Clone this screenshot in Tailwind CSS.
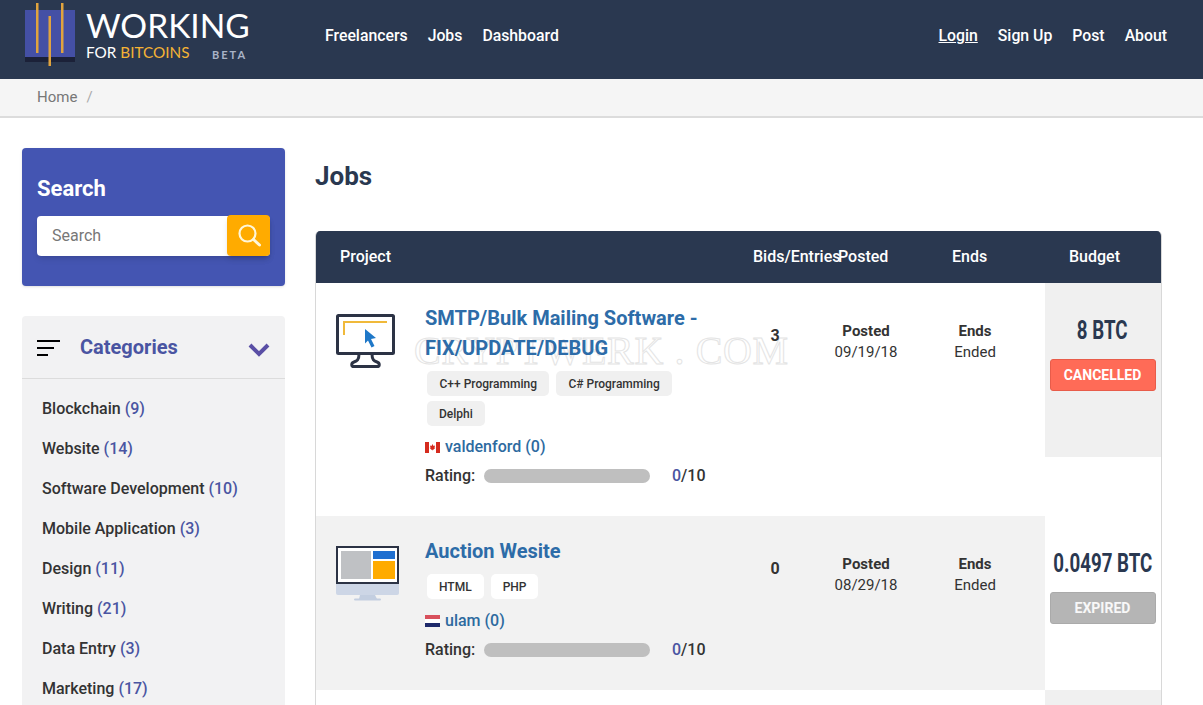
<!DOCTYPE html>
<html lang="en">
<head>
    <meta charset="UTF-8" />
    <meta name="viewport" content="width=device-width, initial-scale=1" />
    <title>Jobs - Working For Bitcoins</title>
    <script src="https://cdn.jsdelivr.net/npm/@tailwindcss/browser@4"></script>
</head>
<body class="bg-white font-['Roboto',sans-serif] text-[#333]">
<div class="relative h-[705px] overflow-hidden">
    <!-- top nav -->
    <header class="flex h-[79px] items-center bg-[#2a3850] pb-[8px] text-white">
        <a href="#" class="relative ml-[25px] block h-[70px] w-[223px] shrink-0 self-start">
            <svg class="absolute left-0 top-0" width="50" height="70" viewBox="0 0 50 70">
                <rect x="0" y="10" width="50" height="50" fill="#4450a5" />
                <rect x="0" y="57" width="50" height="5" fill="#1b2138" />
                <rect x="11" y="3" width="2.500" height="50" fill="#e0a33e" />
                <rect x="36" y="3" width="2.500" height="50" fill="#e0a33e" />
                <rect x="23.500" y="16" width="2.500" height="50" fill="#e0a33e" />
            </svg>
            <span class="absolute left-[61px] top-[10px] whitespace-nowrap font-['Lato',sans-serif] text-[33.500px] font-normal leading-[30px]">WORKING</span>
            <span class="absolute left-[61px] top-[42px] whitespace-nowrap font-['Lato',sans-serif] text-[15.300px] font-normal leading-[20px]">FOR <span class="text-[#f5b335]">BITCOINS</span></span>
            <span class="absolute left-[187px] top-[48px] font-['Lato',sans-serif] text-[11px] font-bold leading-[14px] tracking-[2px] text-[#a9b3c6]">BETA</span>
        </a>
        <nav class="ml-[77px] flex gap-5 text-[15.800px] font-medium">
            <a href="#">Freelancers</a>
            <a href="#">Jobs</a>
            <a href="#">Dashboard</a>
        </nav>
        <nav class="ml-auto mr-[36px] flex gap-5 text-[15.800px] font-medium">
            <a href="#" class="underline">Login</a>
            <a href="#">Sign Up</a>
            <a href="#">Post</a>
            <a href="#">About</a>
        </nav>
    </header>

    <!-- breadcrumb -->
    <div class="flex h-[39px] items-center gap-[9px] border-b-2 border-[#dcdcdc] bg-[#f5f5f5] pl-[37px] text-[15px] text-[#777]">
        <a href="#">Home</a>
        <span class="text-[#aaa]">/</span>
    </div>

    <div class="flex pl-[22px]">
        <!-- sidebar -->
        <aside class="w-[263px] shrink-0 pt-[30px]">
            <div class="h-[138px] rounded-[4px] bg-[#4455b2] px-[15px] pt-[27px] shadow-sm">
                <h3 class="text-[22px] font-bold leading-[28px] text-white">Search</h3>
                <div class="mt-[13px] flex h-[40px] w-[233px] items-center rounded-[4px] bg-white shadow-md">
                    <input type="text" placeholder="Search" class="w-[190px] pl-[15px] text-[16px] outline-none placeholder:text-[#777]" />
                    <button class="ml-auto flex h-[41px] w-[43px] -translate-y-px items-center justify-center rounded-[4px] bg-[#ffab00] shadow-md">
                        <svg width="24" height="24" viewBox="0 0 24 24" fill="none" stroke="#fff6d8" stroke-width="2.200" stroke-linecap="round">
                            <circle cx="10.500" cy="10.500" r="8" />
                            <path d="M16.500 16.500l6 5.500" stroke-width="3" />
                        </svg>
                    </button>
                </div>
            </div>

            <div class="mt-[30px] rounded-[4px] bg-[#f2f2f3]">
                <div class="flex h-[63px] items-center border-b border-[#dcdcdc] pl-[15px] pr-[15px]">
                    <svg width="23" height="16" viewBox="0 0 23 16" class="mt-[2px]" stroke="#000" stroke-width="2">
                        <path d="M0 1h23M0 8h17M0 15h11" />
                    </svg>
                    <h3 class="ml-[20px] text-[20px] font-bold text-[#4a55a2]">Categories</h3>
                    <svg width="22" height="14" viewBox="0 0 22 14" class="ml-auto mt-[6px]" fill="none" stroke="#5a4fa5" stroke-width="4">
                        <path d="M2 2l9 9 9-9" />
                    </svg>
                </div>
                <ul class="pl-[20px] pt-[10px] text-[16px] font-medium leading-[40px]">
                    <li>Blockchain <span class="text-[#4a55a2]">(9)</span></li>
                    <li>Website <span class="text-[#4a55a2]">(14)</span></li>
                    <li>Software Development <span class="text-[#4a55a2]">(10)</span></li>
                    <li>Mobile Application <span class="text-[#4a55a2]">(3)</span></li>
                    <li>Design <span class="text-[#4a55a2]">(11)</span></li>
                    <li>Writing <span class="text-[#4a55a2]">(21)</span></li>
                    <li>Data Entry <span class="text-[#4a55a2]">(3)</span></li>
                    <li>Marketing <span class="text-[#4a55a2]">(17)</span></li>
                </ul>
            </div>
        </aside>

        <!-- jobs table -->
        <main class="ml-[30px] w-[847px]">
            <h1 class="mt-[40px] text-[26px] font-bold leading-[36px] text-[#2a3850]">Jobs</h1>
            <div class="mt-[37px] overflow-hidden rounded-t-[5px] border-x border-[#d8d8d8]">
                <div class="-mx-px flex h-[52px] items-center whitespace-nowrap bg-[#2a3850] text-[16px] font-medium text-white">
                    <div class="w-[438px] pl-[25px]">Project</div>
                    <div class="w-[85px]">Bids/Entries</div>
                    <div class="w-[114px]">Posted</div>
                    <div class="w-[117px]">Ends</div>
                    <div>Budget</div>
                </div>

                <!-- row 1 -->
                <div class="flex h-[233px] bg-white">
                    <div class="w-[109px] shrink-0 pl-[20px] pt-[31px]">
                        <svg width="59" height="54" viewBox="0 0 59 54" fill="none">
                            <rect x="1.500" y="1.500" width="56" height="38" rx="1" stroke="#2c3345" stroke-width="3" />
                            <path d="M8 21V8h43" stroke="#f0b93a" stroke-width="2" />
                            <path d="M29 15l11 9-5 1 3.500 7-3 1.500-3.500-7-3 3z" fill="#1f78c8" />
                            <path d="M23 40c0 6-2 7-5 8-3 1-3 4.500 0 4.500h23c3 0 3-3.500 0-4.500-3-1-5-2-5-8" stroke="#2c3345" stroke-width="3" />
                        </svg>
                    </div>
                    <div class="w-[320px] shrink-0 pt-[20px]">
                        <a href="#" class="relative z-10 block text-[20px] font-bold leading-[30px] text-[#2d6ca8]">SMTP/Bulk Mailing Software - FIX/UPDATE/DEBUG</a>
                        <div class="ml-[2px] mt-[8px] flex w-[270px] flex-wrap gap-x-[7px] gap-y-[5px] text-[12px] font-medium">
                            <span class="flex h-[25px] items-center rounded-[5px] bg-[#f0f0f0] px-[12.500px]">C++ Programming</span>
                            <span class="flex h-[25px] items-center rounded-[5px] bg-[#f0f0f0] px-[12px]">C# Programming</span>
                            <span class="flex h-[25px] items-center rounded-[5px] bg-[#f0f0f0] px-[12px]">Delphi</span>
                        </div>
                        <div class="mt-[9px] flex h-[24px] items-center gap-[5px] text-[16px] font-medium text-[#2d6a9f]">
                            <svg width="15" height="11" viewBox="0 0 15 11">
                                <rect width="15" height="11" fill="#fff" />
                                <rect width="4" height="11" fill="#d52b1e" />
                                <rect x="11" width="4" height="11" fill="#d52b1e" />
                                <path d="M7.500 2l1 2 1.500-.5-.5 2.500 1-.2-2.500 2.200-.5-.2v1.200h-.2V7.800l-.5.2L4.500 5.800l1 .2-.5-2.500 1.500.5z" fill="#d52b1e" />
                            </svg>
                            <a href="#">valdenford (0)</a>
                        </div>
                        <div class="mt-[5px] flex h-[24px] items-center text-[16px] font-medium">
                            <span class="w-[59px]">Rating:</span>
                            <span class="h-[14px] w-[166px] rounded-full bg-[#bfbfbf]"></span>
                            <span class="ml-[22px] whitespace-nowrap"><span class="text-[#4a55a2]">0</span>/10</span>
                        </div>
                    </div>
                    <div class="relative z-10 w-[60px] shrink-0 pt-[43px] text-center text-[16px] font-bold leading-[20px]">3</div>
                    <div class="w-[122px] shrink-0 pt-[38px] text-center text-[15px] leading-[21px]"><b class="font-bold">Posted</b><br />09/19/18</div>
                    <div class="w-[96px] shrink-0 pt-[38px] text-center text-[15px] leading-[21px]"><b class="font-bold">Ends</b><br />Ended</div>
                    <div class="ml-[22px] flex h-[174px] w-[116px] shrink-0 flex-col items-center bg-[#f0f0f0] pr-[1px] pt-[32px]">
                        <div class="scale-x-[0.72] whitespace-nowrap text-[26px] font-bold leading-[30px] text-[#2a3850]">8 BTC</div>
                        <button class="mt-[14px] h-[32px] w-[106px] rounded-[3px] border border-[#e85c4a] bg-[#ff6b57] text-[14px] font-bold text-white">CANCELLED</button>
                    </div>
                </div>

                <!-- row 2 -->
                <div class="flex h-[174px] bg-[#f2f2f2]">
                    <div class="w-[109px] shrink-0 pl-[20px] pt-[30px]">
                        <svg width="63" height="55" viewBox="0 0 63 55">
                            <path d="M0 38h63v9a2 2 0 0 1-2 2H2a2 2 0 0 1-2-2z" fill="#cdd6e6" />
                            <path d="M24 49h15l2 4H23z" fill="#c3cee0" />
                            <rect x="18" y="52.500" width="27" height="2" rx="1" fill="#c3cee0" />
                            <rect x="0" y="0" width="63" height="38" fill="#2c3345" />
                            <rect x="2" y="2" width="59" height="34" fill="#fff" />
                            <rect x="5" y="5" width="30" height="28" fill="#bfc1c4" />
                            <rect x="37" y="5" width="22" height="8" fill="#1f6fd0" />
                            <rect x="37" y="15" width="22" height="18" fill="#ffab00" />
                        </svg>
                    </div>
                    <div class="w-[320px] shrink-0 pt-[20px]">
                        <a href="#" class="block text-[20px] font-bold leading-[30px] text-[#2d6ca8]">Auction Wesite</a>
                        <div class="ml-[2px] mt-[8px] flex gap-x-[7px] text-[12px] font-medium">
                            <span class="flex h-[25px] items-center rounded-[5px] bg-white px-[12px]">HTML</span>
                            <span class="flex h-[25px] items-center rounded-[5px] bg-white px-[12px]">PHP</span>
                        </div>
                        <div class="mt-[10px] flex h-[24px] items-center gap-[5px] text-[16px] font-medium text-[#2d6a9f]">
                            <svg width="15" height="12" viewBox="0 0 15 12">
                                <rect width="15" height="4" fill="#d8505c" />
                                <rect y="4" width="15" height="4" fill="#fff" />
                                <rect y="8" width="15" height="4" fill="#1f2a6b" />
                            </svg>
                            <a href="#">ulam (0)</a>
                        </div>
                        <div class="mt-[5px] flex h-[24px] items-center text-[16px] font-medium">
                            <span class="w-[59px]">Rating:</span>
                            <span class="h-[14px] w-[166px] rounded-full bg-[#bfbfbf]"></span>
                            <span class="ml-[22px] whitespace-nowrap"><span class="text-[#4a55a2]">0</span>/10</span>
                        </div>
                    </div>
                    <div class="w-[60px] shrink-0 pt-[43px] text-center text-[16px] font-bold leading-[20px]">0</div>
                    <div class="w-[122px] shrink-0 pt-[38px] text-center text-[15px] leading-[21px]"><b class="font-bold">Posted</b><br />08/29/18</div>
                    <div class="w-[96px] shrink-0 pt-[38px] text-center text-[15px] leading-[21px]"><b class="font-bold">Ends</b><br />Ended</div>
                    <div class="ml-[22px] flex h-[174px] w-[116px] shrink-0 flex-col items-center bg-white pr-[1px] pt-[32px]">
                        <div class="scale-x-[0.72] whitespace-nowrap text-[26px] font-bold leading-[30px] text-[#2a3850]">0.0497 BTC</div>
                        <button class="mt-[14px] h-[32px] w-[106px] rounded-[3px] border border-[#aaa] bg-[#b5b5b5] text-[14px] font-bold text-white/90">EXPIRED</button>
                    </div>
                </div>

                <!-- row 3, cut off by the window -->
                <div class="flex h-[60px] bg-white">
                    <div class="ml-auto w-[116px] bg-[#f0f0f0]"></div>
                </div>
            </div>
        </main>
    </div>

    <!-- watermark -->
    <div class="pointer-events-none absolute left-[414px] top-[327px] z-[5] whitespace-nowrap font-['Liberation_Serif',serif] text-[40px] leading-[48px] tracking-[0.6px] text-transparent [-webkit-text-stroke:1px_#e4e4e4]">CRYPTWERK . COM</div>
</div>
</body>
</html>
